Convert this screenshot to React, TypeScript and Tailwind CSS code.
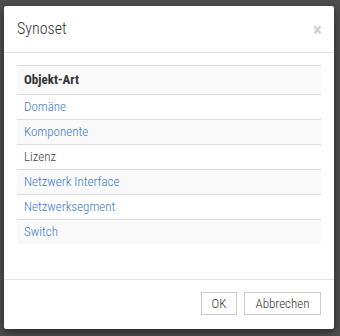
import React from 'react'

const rows: { label: string; link: boolean }[] = [
  { label: 'Domäne', link: true },
  { label: 'Komponente', link: true },
  { label: 'Lizenz', link: false },
  { label: 'Netzwerk Interface', link: true },
  { label: 'Netzwerksegment', link: true },
  { label: 'Switch', link: true },
]

export default function App() {
  return (
    <div className="h-[336px] w-[340px] bg-[#4e4e4e] pt-[6px] pl-[4px] font-['Roboto_Condensed','Roboto',sans-serif]">
      {/* Modal */}
      <div className="flex h-[323px] w-[330px] flex-col rounded-[2px] bg-white shadow-[0_3px_9px_rgba(0,0,0,0.5)]">
        {/* Header */}
        <div className="flex h-[47px] items-center justify-between border-b border-[#e5e5e5] pl-[13px] pr-[12px]">
          <h4 className="text-[16px] font-light leading-none text-[#333]">Synoset</h4>
          <button className="text-[19px] font-bold leading-none text-[#cfcfcf]">×</button>
        </div>

        {/* Body */}
        <div className="flex-1 px-[13px] pt-[12px]">
          <div className="text-[13px] text-[#333]">
            <div className="flex h-[29px] items-center border-t border-[#ddd] bg-[#f9f9f9] pl-[7px] font-bold">
              Objekt-Art
            </div>
            {rows.map((r, i) => (
              <div
                key={r.label}
                className={`flex h-[25px] items-center border-t border-[#ddd] pl-[7px] font-light ${
                  i % 2 === 1 ? 'bg-[#f9f9f9]' : 'bg-white'
                } ${r.link ? 'text-[#3b7dc4]' : 'text-[#444]'}`}
              >
                {r.label}
              </div>
            ))}
          </div>
        </div>

        {/* Footer */}
        <div className="flex h-[50px] items-start justify-end gap-[7px] border-t border-[#e5e5e5] pr-[13px] pt-[12px]">
          <button className="h-[23px] w-[36px] border border-[#ccc] bg-white text-[13px] font-light text-[#333]">
            OK
          </button>
          <button className="h-[23px] w-[77px] border border-[#ccc] bg-white text-[13px] font-light text-[#333]">
            Abbrechen
          </button>
        </div>
      </div>
    </div>
  )
}
